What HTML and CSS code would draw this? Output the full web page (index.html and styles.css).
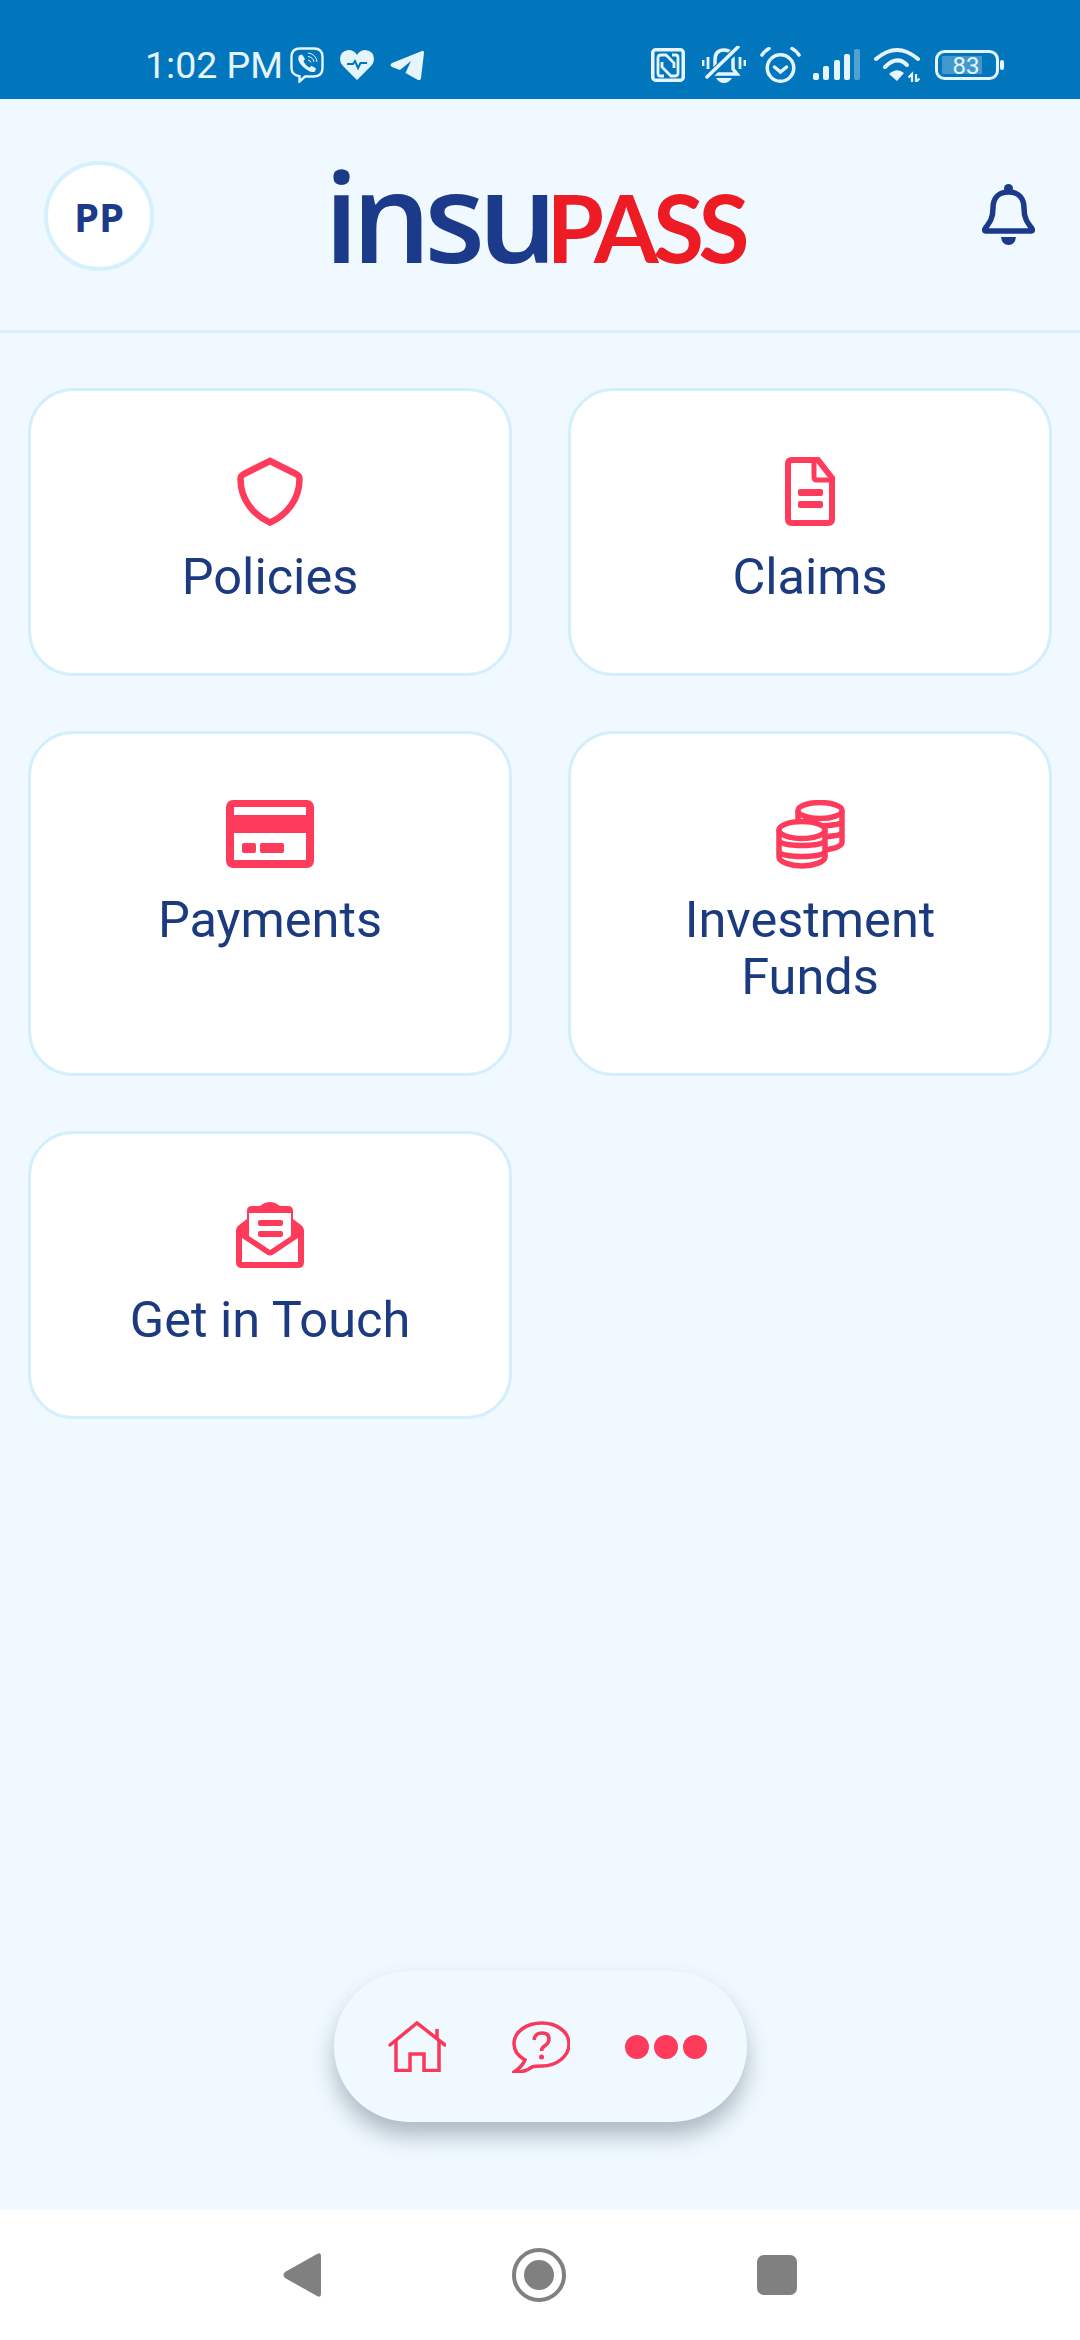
FILE: index.html
```html
<!DOCTYPE html>
<html>
<head>
    <meta charset="utf-8" />
    <title>insuPASS</title>
    <link rel="stylesheet" href="styles.css">
</head>
<body>
    <section id="mainwrapper">
        <!-- status bar -->
        <header class="statusbar">
            <span class="time">1:02 PM</span>
            <svg class="st-viber" width="34" height="36" viewBox="0 0 34 36" fill="none" stroke="currentColor" stroke-width="2.4">
                <path d="M10 1.500H24Q32.500 1.500 32.500 10V21Q32.500 29.500 24 29.500H15L9.500 34.500V29.200Q1.500 28 1.500 21V10Q1.500 1.500 10 1.500Z"/>
                <path d="M9 8.500L12 7.500L15 12L13.500 14Q15 18 19.500 20.500L21.500 18.800L26 21.500L25 24.500Q22 26 18 23.500Q11 19.500 8.500 13.500Q8 10.500 9 8.500Z" fill="currentColor" stroke="none"/>
                <path d="M18 6Q26 7 27 15M18 9.500Q23 10 24 15M18 13Q20.500 13.500 21 15.500" stroke-width="1"/>
            </svg>
            <svg class="st-heart" width="34" height="30" viewBox="0 0 34 30">
                <path d="M17 30L3 16Q0 13 0 9Q0 1 8.500 0Q14 0 17 5Q20 0 25.500 0Q34 1 34 9Q34 13 31 16Z" fill="currentColor"/>
                <path d="M7 14H13L15 11L18 18L20.500 13H27" fill="none" stroke="#0276bd" stroke-width="2"/>
            </svg>
            <svg class="st-telegram" width="34" height="30" viewBox="0 0 34 30">
                <path d="M32 1Q34 0 34 3L31 28Q30.500 31 28 30L15.500 23L21 11L10 20L2 17Q-1 15 2 13Z" fill="currentColor"/>
            </svg>
            <div class="st-right">
                <svg class="st-nfc" width="34" height="34" viewBox="0 0 34 34" fill="none" stroke="currentColor" stroke-width="3.500">
                    <rect x="1.750" y="1.750" width="30.500" height="30.500" rx="3"/>
                    <path d="M13 28H9.500Q7 28 7 25.500V10Q7 7 10 7H15L23 15V20" stroke-width="2.800"/>
                    <path d="M21 7H24.500Q27 7 27 9.500V25Q27 28 24 28H20L11 19V14" stroke-width="2.800"/>
                </svg>
                <svg class="st-mute" width="44" height="37" viewBox="0 0 44 37" fill="none" stroke="currentColor" stroke-width="3.500">
                    <path d="M9 28L13 23V14Q13 4 22 4Q31 4 31 14V23L35 28Z"/>
                    <path d="M14 32H30Q27 37 22 37Q17 37 14 32Z" fill="currentColor" stroke="none"/>
                    <path d="M3 34L38 0" stroke="#0276bd" stroke-width="7"/>
                    <path d="M5 31L36 1" stroke-linecap="round"/>
                    <path d="M1 14V20M6 11V23M38 11V23M43 14V20" stroke-width="2.800"/>
                </svg>
                <svg class="st-alarm" width="41" height="36" viewBox="0 0 41 36" fill="none" stroke="currentColor" stroke-width="3.500" stroke-linecap="round">
                    <circle cx="20.500" cy="21" r="13.250"/>
                    <path d="M14.500 20L20.500 25L26.500 20"/>
                    <path d="M2 8Q4.500 4 9 1.500M39 8Q36.500 4 32 1.500"/>
                </svg>
                <svg class="st-signal" width="48" height="31" viewBox="0 0 48 31" fill="currentColor">
                    <rect x="0" y="24" width="6" height="7" rx="2"/>
                    <rect x="10" y="17" width="6" height="14" rx="2"/>
                    <rect x="21" y="11" width="6" height="20" rx="2"/>
                    <rect x="31" y="5" width="6" height="26" rx="2"/>
                    <rect class="st-dim" x="41" y="0" width="6" height="31" rx="2"/>
                </svg>
                <svg class="st-wifi" width="46" height="35" viewBox="0 0 46 35" fill="none" stroke="currentColor" stroke-width="4" stroke-linecap="round">
                    <path d="M2 12Q23 -6 44 12"/>
                    <path d="M11 20Q23 8 33 18"/>
                    <path d="M15 27Q23 20 30 26L23 34Z" fill="currentColor" stroke="none"/>
                    <path d="M38 35V27L34.500 30.500M42 27V35L45.500 31.500" stroke-width="2.200" stroke-linecap="butt"/>
                </svg>
                <svg class="st-battery" width="69" height="30" viewBox="0 0 69 30">
                    <rect x="1.500" y="1.500" width="61" height="27" rx="8" fill="none" stroke="currentColor" stroke-width="3"/>
                    <rect class="st-fill" x="7" y="6" width="40" height="18"/>
                    <rect x="65" y="10" width="4" height="10" rx="2" fill="currentColor"/>
                    <text class="st-level" x="31" y="24">83</text>
                </svg>
            </div>
        </header>

        <!-- top bar with logo -->
        <section class="topbar">
            <div class="avatar">PP</div>
            <div class="logo"><span class="logo-insu">insu</span><span class="logo-pass">PASS</span></div>
            <svg class="bell" width="53" height="61" viewBox="0 0 53 61" fill="none" stroke="currentColor" stroke-width="5.500">
                <circle cx="26.500" cy="4.500" r="4.500" fill="currentColor" stroke="none"/>
                <path d="M26.500 8C15 8 11 16 11 24C11 34 8 38 3.500 44Q1.500 47 4 47H49Q51.500 47 49.500 44C45 38 42 34 42 24C42 16 38 8 26.500 8Z"/>
                <path d="M19 53H34Q33 61 26.500 61Q20 61 19 53Z" fill="currentColor" stroke="none"/>
            </svg>
        </section>

        <!-- menu cards -->
        <section class="cards">
            <a class="card">
                <svg class="card-icon" width="66" height="69" viewBox="0 0 66 69" fill="none" stroke="currentColor" stroke-width="6.500">
                    <path d="M33 4L59 17Q62.500 18.500 62.500 22C62.500 42 50 58 33 65.500C16 58 3.500 42 3.500 22Q3.500 18.500 7 17Z"/>
                </svg>
                <span class="card-label">Policies</span>
            </a>
            <a class="card">
                <svg class="card-icon" width="50" height="69" viewBox="0 0 50 69" fill="none" stroke="currentColor" stroke-width="6">
                    <path d="M7 3H33L47 21V62Q47 66 43 66H7Q3 66 3 62V7Q3 3 7 3Z"/>
                    <path d="M29 3V20Q29 23 32 23H47" stroke-width="5"/>
                    <rect x="13" y="32" width="25" height="7" rx="2" fill="currentColor" stroke="none"/>
                    <rect x="13" y="44" width="25" height="7" rx="2" fill="currentColor" stroke="none"/>
                </svg>
                <span class="card-label">Claims</span>
            </a>
            <a class="card">
                <svg class="card-icon" width="88" height="69" viewBox="0 0 88 69">
                    <rect width="88" height="68" rx="7" fill="currentColor"/>
                    <rect x="8" y="7" width="72" height="8" fill="#fff"/>
                    <rect x="8" y="33" width="72" height="27" fill="#fff"/>
                    <rect x="16" y="43" width="14" height="10" rx="2" fill="currentColor"/>
                    <rect x="34" y="43" width="24" height="10" rx="2" fill="currentColor"/>
                </svg>
                <span class="card-label">Payments</span>
            </a>
            <a class="card">
                <svg class="card-icon" width="69" height="69" viewBox="0 0 69 69" fill="#fff" stroke="currentColor" stroke-width="5.500">
                    <path d="M22 11V42C22 47 33 50 44 50C55 50 66 47 66 42V11"/>
                    <path d="M22 22C26 27 62 27 66 22M22 33C26 38 62 38 66 33" fill="none"/>
                    <ellipse cx="44" cy="10.500" rx="22" ry="8"/>
                    <path d="M3 30V57C3 62 15 66 26 66C37 66 49 62 49 57V30"/>
                    <path d="M3 41C7 47 45 47 49 41M3 52C7 58 45 58 49 52" fill="none"/>
                    <ellipse cx="26" cy="30" rx="23" ry="8.500"/>
                </svg>
                <span class="card-label">Investment Funds</span>
            </a>
            <a class="card">
                <svg class="card-icon" width="68" height="69" viewBox="0 0 68 69">
                    <path d="M0 30Q0 27 3 25L11 19V11Q11 6 16 6H24Q34 -2 44 6H52Q57 6 57 11V19L65 25Q68 27 68 30V62Q68 68 62 68H6Q0 68 0 62Z" fill="currentColor"/>
                    <path d="M13 13H55V36L34 50L13 36Z" fill="#fff"/>
                    <path d="M6 38L30 54Q34 57 38 54L62 38V62H6Z" fill="#fff"/>
                    <rect x="22" y="20" width="25" height="6" rx="2" fill="currentColor"/>
                    <rect x="22" y="31" width="25" height="6" rx="2" fill="currentColor"/>
                </svg>
                <span class="card-label">Get in Touch</span>
            </a>
        </section>

        <!-- floating pill menu -->
        <nav class="pill">
            <svg width="58" height="51" viewBox="0 0 58 51" fill="none" stroke="currentColor" stroke-width="3.500" stroke-linecap="round">
                <path d="M2 24L29 2L57 24"/>
                <path d="M8 19V49.500H22V33H36V49.500H51V19" stroke-linecap="butt"/>
                <path d="M49 8V17" stroke-linecap="butt"/>
            </svg>
            <svg class="pill-help" width="58" height="52" viewBox="0 0 58 52" fill="none" stroke="currentColor" stroke-width="3.500">
                <path d="M13 39C6 35 2 30 2 23C2 11 14 2 30 2C45 2 57 11 57 23C57 35 45 45 30 45C26 45 23 45 20 46Q12 52 2 51Q10 46 13 39Z"/>
                <path d="M22 19Q23 12 30 12Q37 12 37 18Q37 22 32.500 25Q29.500 27 29.500 30"/>
                <circle cx="29.500" cy="36" r="2.500" fill="currentColor" stroke="none"/>
            </svg>
            <div class="dots"><i></i><i></i><i></i></div>
        </nav>

        <!-- android nav bar -->
        <footer class="navbar">
            <svg width="38" height="44" viewBox="0 0 38 44">
                <path d="M34 1Q38 -1 38 3V41Q38 45 34 43L2 25Q-1 22 2 19Z" fill="currentColor"/>
            </svg>
            <svg width="54" height="54" viewBox="0 0 54 54">
                <circle cx="27" cy="27" r="25" fill="none" stroke="currentColor" stroke-width="4"/>
                <circle cx="27" cy="27" r="15" fill="currentColor"/>
            </svg>
            <svg width="40" height="40" viewBox="0 0 40 40">
                <rect width="40" height="40" rx="7" fill="currentColor"/>
            </svg>
        </footer>
    </section>
</body>
</html>
```

FILE: styles.css
```css
* {
    padding: 0;
    margin: 0;
    box-sizing: border-box;
}
body {
    background-color: #f0f9ff;
    font-family: Roboto, "Liberation Sans", sans-serif;
}
#mainwrapper {
    width: 1080px;
    height: 2340px;
    display: flex;
    flex-direction: column;
}

/* status bar */
.statusbar {
    height: 99px;
    padding: 30px 76px 0 145px;
    background-color: #0276bd;
    color: #e6f5fd;
    display: flex;
    align-items: center;
}
.time {
    font-size: 37.5px;
    width: 138px;
    white-space: nowrap;
}
.statusbar svg {
    flex-shrink: 0;
    display: block;
}
.st-viber {
    margin-left: 7px;
}
.st-heart,
.st-telegram {
    margin-left: 16px;
}
.st-right {
    margin-left: auto;
    display: flex;
    align-items: center;
}
.st-mute {
    margin-left: 17px;
}
.st-alarm {
    margin-left: 14px;
}
.st-signal {
    margin-left: 12px;
}
.st-wifi {
    margin-left: 13px;
}
.st-battery {
    margin-left: 15px;
}
.st-dim {
    opacity: 0.35;
}
.st-fill {
    fill: #ffffff;
    opacity: 0.25;
}
.st-level {
    fill: currentColor;
    font-size: 24px;
    text-anchor: middle;
}

/* top bar */
.topbar {
    height: 234px;
    padding: 0 45px 0 44px;
    border-bottom: 3px solid #d6f0fd;
    color: #1b3a8a;
    display: flex;
    align-items: center;
}
.avatar {
    width: 110px;
    height: 110px;
    margin-top: 3px;
    border: 4px solid #d6f0fd;
    border-radius: 50%;
    background-color: #ffffff;
    font-family: "Open Sans", sans-serif;
    font-size: 40px;
    font-weight: 700;
    display: flex;
    align-items: center;
    justify-content: center;
}
.logo {
    margin: 12px 0 0 170px;
    width: 415px;
    display: flex;
    align-items: baseline;
    white-space: nowrap;
    line-height: 150px;
}
.logo-insu {
    font-family: "Open Sans", sans-serif;
    font-size: 125px;
    font-weight: 600;
    letter-spacing: -7px;
    color: #1b3a8a;
}
.logo-pass {
    margin-left: -4px;
    font-family: Lato, sans-serif;
    font-size: 93px;
    font-weight: 700;
    letter-spacing: -5.5px;
    color: #ed1c24;
}
.bell {
    margin-left: auto;
}

/* cards */
.cards {
    padding: 55px 28px 0;
    display: grid;
    grid-template-columns: 484px 484px;
    column-gap: 56px;
    row-gap: 55px;
    align-items: stretch;
}
.card {
    padding: 66px 60px 68px;
    border: 3px solid #d3effc;
    border-radius: 45px;
    background-color: #ffffff;
    color: #ff3b5c;
    display: flex;
    flex-direction: column;
    align-items: center;
}
.card-icon {
    display: block;
}
.card-label {
    margin-top: 22px;
    color: #1b3a80;
    font-size: 50.5px;
    line-height: 57px;
    text-align: center;
}

/* pill menu */
.pill {
    width: 413px;
    height: 151px;
    margin: auto auto 88px;
    padding-left: 54px;
    border-radius: 76px;
    background-color: #f0f9ff;
    box-shadow: 0 14px 22px rgba(50, 70, 80, 0.35);
    color: #f8395b;
    display: flex;
    align-items: center;
}
.pill-help {
    margin-left: 66px;
}
.dots {
    margin-left: 55px;
    display: flex;
    gap: 5px;
}
.dots i {
    width: 24px;
    height: 24px;
    border-radius: 50%;
    background-color: #ff3b5c;
}

/* android nav */
.navbar {
    height: 130px;
    background-color: #ffffff;
    color: #808080;
    display: flex;
    align-items: center;
    justify-content: center;
    gap: 191px;
}
```
